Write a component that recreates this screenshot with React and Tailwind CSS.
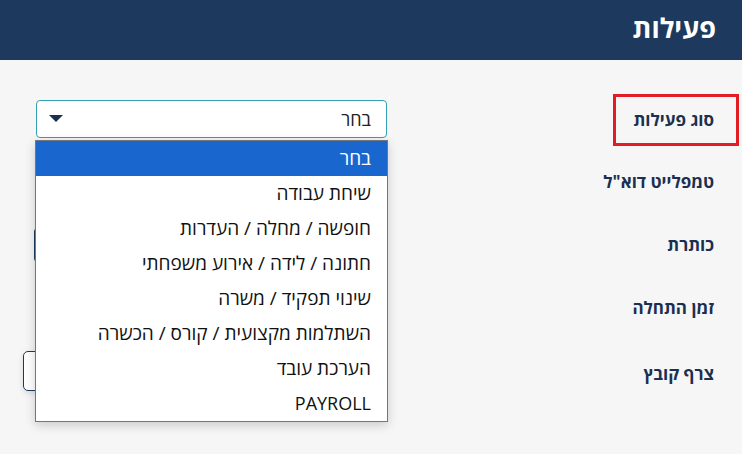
import React from "react";

const labelCls =
  "w-[126px] h-[52px] flex items-center justify-start pr-[22px] border-[3px] whitespace-nowrap text-[17px] font-bold text-[#1b2f50]";

const options = [
  "בחר",
  "שיחת עבודה",
  "חופשה / מחלה / העדרות",
  "חתונה / לידה / אירוע משפחתי",
  "שינוי תפקיד / משרה",
  "השתלמות מקצועית / קורס / הכשרה",
  "הערכת עובד",
  "PAYROLL",
];

export default function App() {
  return (
    <div
      dir="rtl"
      className="w-[742px] h-[454px] overflow-hidden bg-[#f6f6f6] relative"
      style={{ fontFamily: '"Open Sans", "Liberation Sans", sans-serif' }}
    >
      <header className="h-[60px] bg-[#1d3a5e] flex items-center pr-[26px]">
        <h1 className="text-[27px] font-bold text-white leading-none pb-[6px]">פעילות</h1>
      </header>

      <main className="pt-[34px] pr-[3px] flex flex-col">
        {/* Row 1 */}
        <div className="flex items-center h-[52px]">
          <div className={labelCls + " border-[#e31b23]"}>סוג פעילות</div>
          <div className="mr-auto ml-[36px] w-[351px] h-[38px] mb-[2px] bg-white border border-[#35a0b4] rounded-[4px] flex items-center justify-between pr-[15px] pl-[12px]">
            <span className="text-[18px] text-[#222]">בחר</span>
            <svg width="14" height="8" viewBox="0 0 14 8">
              <path d="M0 0 H14 L7 7 Z" fill="#1d2f4e" />
            </svg>
          </div>
        </div>

        {/* Row 2 */}
        <div className="flex items-center h-[63px] mt-[4px]">
          <div className={labelCls + " border-transparent"}>טמפלייט דוא"ל</div>
          <div className="mr-auto ml-[36px] w-[351px] h-[36px] bg-white border border-[#1d3a5e] rounded-[4px]" />
        </div>

        {/* Row 3 */}
        <div className="flex items-center h-[63px]">
          <div className={labelCls + " border-transparent"}>כותרת</div>
          <div className="mr-auto ml-[34px] w-[353px] h-[34px] bg-white border-2 border-[#1d3a5e] rounded-[4px]" />
        </div>

        {/* Row 4 */}
        <div className="flex items-center h-[63px]">
          <div className={labelCls + " border-transparent"}>זמן התחלה</div>
          <div className="mr-auto ml-[36px] w-[351px] h-[36px] bg-white border border-[#1d3a5e] rounded-[4px]" />
        </div>

        {/* Row 5 */}
        <div className="flex items-center h-[70px]">
          <div className={labelCls + " border-transparent"}>צרף קובץ</div>
          <div className="mr-auto ml-[23px] w-[200px] h-[40px] mt-[-6px] bg-white border border-[#1d3a5e] rounded-[5px] shadow-[0_2px_6px_rgba(0,0,0,0.12)]" />
        </div>
      </main>

      {/* Open dropdown list */}
      <ul className="absolute left-[35px] top-[140px] w-[353px] bg-white border border-[#767676] shadow-[0_3px_10px_rgba(0,0,0,0.18)]">
        {options.map((o, i) => (
          <li
            key={o}
            className={
              "h-[35px] flex items-center pr-[16px] " +
              (o === "PAYROLL" ? "text-[18px] " : "text-[19px] ") +
              (i === 0 ? "bg-[#1a66cf] text-white" : "text-[#111]")
            }
          >
            {o}
          </li>
        ))}
      </ul>
    </div>
  );
}
